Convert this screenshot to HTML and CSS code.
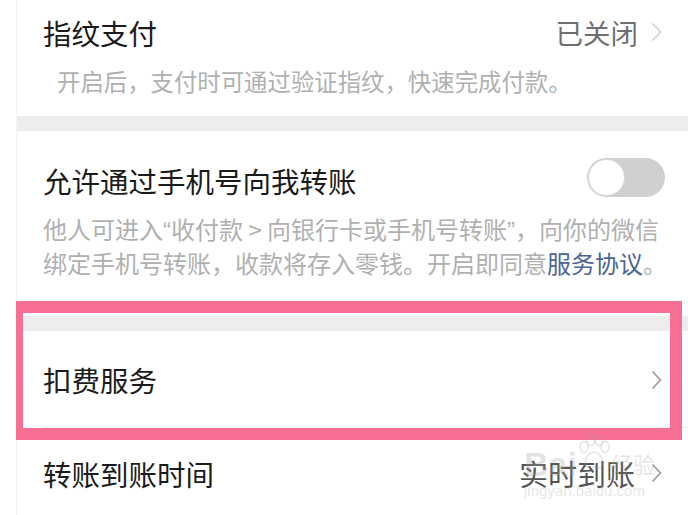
FILE: index.html
```html
<!DOCTYPE html>
<html lang="zh-CN">
<head>
    <meta charset="UTF-8">
    <meta name="viewport" content="width=device-width, initial-scale=1.0">
    <title>支付设置</title>
    <link rel="stylesheet" href="styles.css">
</head>
<body>
    <div class="page">
        <div class="section first">
            <div class="row">
                <span class="title">指纹支付</span>
                <span class="value">已关闭</span>
                <svg class="chevron light" width="11" height="20" viewBox="0 0 11 20"><path d="M1.5 1.5 L9.5 10 L1.5 18.5" fill="none" stroke="currentColor" stroke-width="1.6"/></svg>
            </div>
            <p class="desc indent">开启后，支付时可通过验证指纹，快速完成付款。</p>
        </div>

        <div class="band"></div>

        <div class="section second">
            <div class="row">
                <span class="title">允许通过手机号向我转账</span>
                <span class="toggle"><span class="knob"></span></span>
            </div>
            <p class="desc">他人可进入<span class="q">“</span>收付款 &gt; 向银行卡或手机号转账<span class="q">”</span>，向你的微信<br>绑定手机号转账，收款将存入零钱。开启即同意<span class="link">服务协议</span>。</p>
        </div>

        <div class="band"></div>

        <div class="row item divided">
            <span class="title">扣费服务</span>
            <svg class="chevron" width="11" height="20" viewBox="0 0 11 20"><path d="M1.5 1.5 L9.5 10 L1.5 18.5" fill="none" stroke="currentColor" stroke-width="1.6"/></svg>
        </div>

        <div class="row item last">
            <span class="title">转账到账时间</span>
            <span class="value dark">实时到账</span>
            <svg class="chevron" width="11" height="20" viewBox="0 0 11 20"><path d="M1.5 1.5 L9.5 10 L1.5 18.5" fill="none" stroke="currentColor" stroke-width="1.6"/></svg>
        </div>

        <div class="highlight"></div>

        <div class="watermark">
            <div class="wm-top">
                <span class="wm-bai">Bai</span>
                <svg class="paw" width="34" height="36" viewBox="0 0 34 36"><g fill="none" stroke="currentColor" stroke-width="1.6"><ellipse cx="7" cy="13" rx="4" ry="5.5"/><ellipse cx="14" cy="6" rx="4" ry="5.5"/><ellipse cx="22" cy="6" rx="4" ry="5.5"/><ellipse cx="28" cy="13" rx="4" ry="5.5"/><path d="M8 30 C8 22 13 18 17 18 C21 18 26 22 26 30 C26 34 21 34 17 33 C13 34 8 34 8 30 Z"/></g></svg>
                <span class="wm-jy">经验</span>
            </div>
            <div class="wm-url">jingyan.baidu.com</div>
        </div>
    </div>
</body>
</html>
```

FILE: styles.css
```css
body {
    margin: 0;
    background: #fff;
    font-family: "Noto Sans CJK SC", "Noto Sans", sans-serif;
}
.page {
    position: relative;
    width: 688px;
    height: 515px;
    overflow: hidden;
}
.section, .row.item, .band {
    margin-left: 16px;
    border-left: 1px solid #f3f3f3;
}
.row {
    display: flex;
    align-items: center;
    padding: 0 26px 0 26px;
}
.title {
    font-size: 28.5px;
    color: #1b1b1b;
    flex: 1;
    white-space: nowrap;
}
.value {
    font-size: 27.5px;
    color: #6f6f6f;
    margin-right: 13px;
}
.value.dark {
    font-size: 29px;
    color: #555;
    margin-right: 16px;
}
.chevron {
    color: #9a9a9a;
}
.chevron.light {
    color: #d2d2d2;
}
.desc {
    margin: 0;
    padding: 0 16px 0 26px;
    font-size: 24px;
    line-height: 32px;
    color: #b0b0b0;
    white-space: nowrap;
}
.desc.indent {
    padding-left: 40px;
    font-size: 23.4px;
}
.q {
    font-family: "Liberation Sans", sans-serif;
}
.link {
    color: #4a6596;
}
.first {
    height: 116px;
}
.first .row {
    height: 64px;
}
.first .desc {
    margin-top: 1px;
}
.band {
    height: 15px;
    background: #ededed;
}
.second {
    padding-top: 27px;
    height: 158px;
}
.second .row {
    height: 44px;
    padding-right: 23px;
}
.second .desc {
    margin-top: 11px;
}
.toggle {
    width: 78px;
    height: 39px;
    border-radius: 20px;
    background: #cfcfcf;
    display: flex;
    align-items: center;
    padding-left: 1px;
    box-sizing: border-box;
    margin-top: -6px;
}
.knob {
    width: 37px;
    height: 37px;
    border-radius: 50%;
    background: #fff;
    box-sizing: border-box;
    border: 1px solid #d8d8d8;
}
.row.item {
    height: 97px;
}
.row.item.last {
    height: 90px;
}
.row.divided {
    position: relative;
}
.row.divided::after {
    content: "";
    position: absolute;
    left: 26px;
    right: 0;
    bottom: 0;
    height: 1px;
    background: #f0f0f0;
}
.highlight {
    position: absolute;
    left: 16px;
    top: 301px;
    width: 666px;
    height: 139px;
    box-sizing: border-box;
    border: 12px solid #f76f93;
    border-left-width: 7px;
}
.watermark {
    position: absolute;
    left: 524px;
    top: 424px;
    color: rgba(160, 160, 160, 0.28);
    font-family: "Liberation Sans", sans-serif;
}
.wm-top {
    display: flex;
    align-items: flex-end;
    gap: 0;
}
.wm-bai {
    font-size: 34px;
    font-weight: bold;
    line-height: 40px;
    margin-top: 20px;
}
.paw {
    margin-bottom: 14px;
}
.wm-jy {
    font-family: "Noto Sans CJK SC", sans-serif;
    font-size: 22px;
    line-height: 30px;
    margin-bottom: 6px;
}
.wm-url {
    font-size: 15px;
    margin-top: -2px;
}
```
